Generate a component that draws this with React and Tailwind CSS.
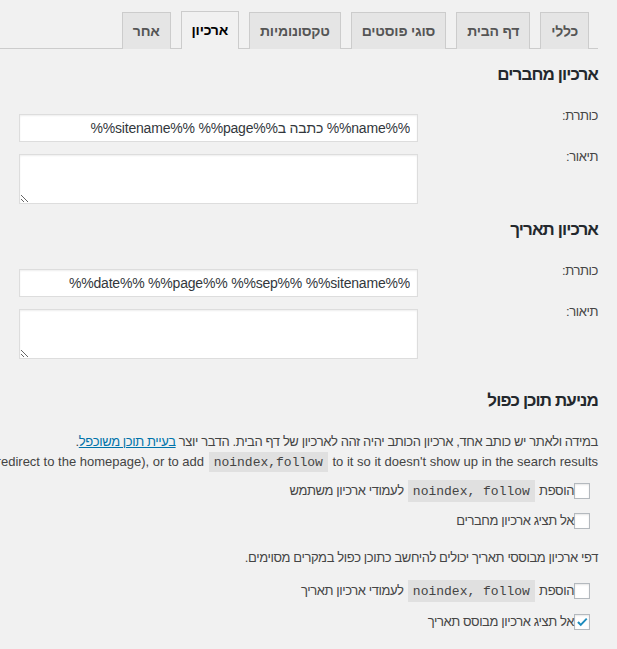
import React from "react";

const tabs = [
  { label: "כללי" },
  { label: "דף הבית" },
  { label: "סוגי פוסטים" },
  { label: "טקסונומיות" },
  { label: "ארכיון", active: true },
  { label: "אחר" },
];

const Checkbox = ({ checked }) => (
  <span className="inline-flex items-center justify-center w-4 h-4 shrink-0 bg-white border border-[#b4b9be] shadow-[inset_0_1px_2px_rgba(0,0,0,0.1)]">
    {checked && (
      <svg viewBox="0 0 16 16" className="w-[15px] h-[15px]">
        <path d="M2.5 8.2 L4.3 6.6 L6.6 9 L12.6 2.8 L14.2 4.4 L6.6 12.4 Z" fill="#1e8cbe" />
      </svg>
    )}
  </span>
);

// inline code like wp-admin's <code>
const Code = ({ children, block }) => (
  <code
    className={`${block ? "inline-block leading-[17px]" : ""} bg-[rgba(0,0,0,0.07)] px-[5px] pt-[3px] pb-[2px] mx-px text-[13px] tracking-normal text-[#444] font-['Liberation_Mono',Consolas,monospace]`}
  >
    {children}
  </code>
);

const FieldRow = ({ label, value, area, top }) => (
  <div className={`flex items-start ${top}`}>
    <label className="w-[180px] leading-[20px] text-[13px] text-[#444]">{label}</label>
    {area ? (
      <textarea
        dir="rtl"
        className="mt-[7px] w-[399px] h-[50px] bg-white border border-[#ddd] shadow-[inset_0_1px_2px_rgba(0,0,0,0.07)] outline-none"
      />
    ) : (
      <input
        dir="rtl"
        defaultValue={value}
        className="mt-[8px] w-[399px] h-[28px] px-[7px] bg-white border border-[#ddd] shadow-[inset_0_1px_2px_rgba(0,0,0,0.07)] text-[14px] tracking-[-0.2px] text-[#32373c] outline-none"
      />
    )}
  </div>
);

const CheckRow = ({ checked, top, children }) => (
  <div className={`flex items-center h-[22px] pr-[8px] ${top}`}>
    <Checkbox checked={checked} />
    <span className="leading-[20px] whitespace-nowrap">{children}</span>
  </div>
);

const Heading = ({ top, children }) => (
  <h2 className={`${top} h-[22px] leading-[22px] text-[17px] tracking-[-0.9px] font-bold text-[#23282d]`}>{children}</h2>
);

export default function App() {
  return (
    <div
      dir="rtl"
      className="min-h-[649px] w-[617px] overflow-hidden bg-[#f1f1f1] text-[13px] tracking-[-0.4px] text-[#444] font-['Liberation_Sans',Arial,'DejaVu_Sans',sans-serif]"
    >
      <div className="mr-[19px]">
        {/* tabs */}
        <div className="flex items-end gap-[10px] pt-[11px] pr-[9px] border-b border-[#ccc]">
          {tabs.map((t) => (
            <div
              key={t.label}
              className={`px-[10px] py-[6px] leading-[24px] text-[14px] tracking-[-0.2px] font-bold border border-[#ccc] border-b-0 -mb-px ${
                t.active ? "bg-[#f1f1f1] text-black pb-[7px]" : "bg-[#e5e5e5] text-[#555]"
              }`}
            >
              {t.label}
            </div>
          ))}
        </div>

        {/* author archives */}
        <Heading top="mt-[15px]">ארכיון מחברים</Heading>
        <FieldRow top="mt-[20px]" label="כותרת:" value="%%name%% כתבה ב%%sitename%% %%page%%" />
        <FieldRow top="mt-[5px]" label="תיאור:" area />

        {/* date archives */}
        <Heading top="mt-[15px]">ארכיון תאריך</Heading>
        <FieldRow top="mt-[20px]" label="כותרת:" value="%%date%% %%page%% %%sep%% %%sitename%%" />
        <FieldRow top="mt-[5px]" label="תיאור:" area />

        {/* duplicate content */}
        <Heading top="mt-[31px]">מניעת תוכן כפול</Heading>
        <p className="mt-[20px] leading-[20px]">
          במידה ולאתר יש כותב אחד, ארכיון הכותב יהיה זהה לארכיון של דף הבית. הדבר יוצר{" "}
          <a href="#" className="text-[#0073aa] underline">בעיית תוכן משוכפל</a>.
          <br />
          <span className="whitespace-nowrap tracking-normal">
            If this is the case, consider disabling it (this will redirect to the homepage), or to add{" "}
            <Code>noindex,follow</Code> to it so it doesn't show up in the search results.
          </span>
        </p>

        <CheckRow top="mt-[7px]">
          הוספת <Code block>noindex, follow</Code> לעמודי ארכיון משתמש
        </CheckRow>
        <CheckRow top="mt-[8px]">אל תציג ארכיון מחברים</CheckRow>

        <p className="mt-[16px] leading-[20px]">דפי ארכיון מבוססי תאריך יכולים להיחשב כתוכן כפול במקרים מסוימים.</p>

        <CheckRow top="mt-[12px]">
          הוספת <Code block>noindex, follow</Code> לעמודי ארכיון תאריך
        </CheckRow>
        <CheckRow top="mt-[9px]" checked>
          אל תציג ארכיון מבוסס תאריך
        </CheckRow>
      </div>
    </div>
  );
}
